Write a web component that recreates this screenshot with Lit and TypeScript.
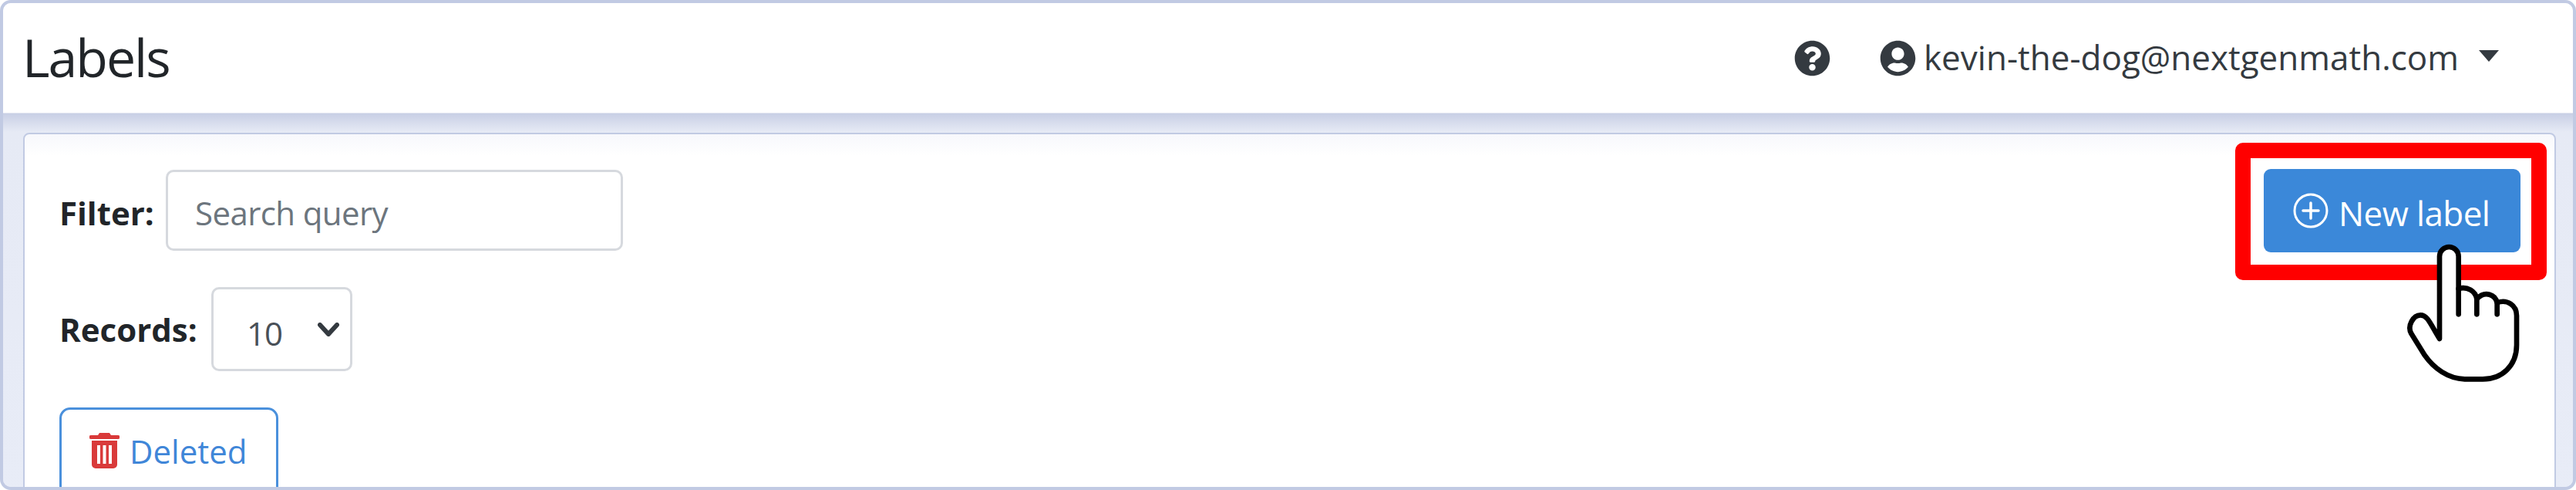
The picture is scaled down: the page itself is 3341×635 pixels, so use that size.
import { LitElement, html, css } from "lit";
import { customElement } from "lit/decorators.js";

@customElement("app-root")
export class AppRoot extends LitElement {
  static styles = css`
    :host {
      display: block;
      box-sizing: border-box;
      position: relative;
      width: 3341px;
      height: 635px;
      border: 4px solid #c1cae3;
      border-radius: 14px;
      overflow: hidden;
      background: #e8ecf7;
      font-family: "Open Sans", "Noto Sans", sans-serif;
      color: #212529;
    }
    .header {
      box-sizing: border-box;
      height: 143px;
      background: #fff;
      display: flex;
      align-items: center;
      padding: 0 96px 0 25px;
      border-bottom: 1px solid #e4e7f1;
    }
    h1 {
      margin: 0;
      font-size: 68px;
      font-weight: 500;
      letter-spacing: -2px;
      line-height: 1;
      flex: 1;
      position: relative;
      top: -1px;
    }
    .nav {
      display: flex;
      align-items: center;
      font-size: 44px;
      color: #343a40;
    }
    .nav svg { display: block; width: 47px; height: 47px; }
    .help { margin-right: 64px; }
    .user { margin-right: 12px; }
    .nav span.mail { position: relative; top: -1px; left: -2px; }
    .caret {
      width: 0;
      height: 0;
      margin-left: 24px;
      border-left: 13px solid transparent;
      border-right: 13px solid transparent;
      border-top: 15px solid #343a40;
      position: relative;
      top: -3px;
    }
    .main {
      height: 480px;
      padding: 25px 22px 0 26px;
      background: linear-gradient(#c8cfe5, #e6eaf5 24px, #e8ecf7);
    }
    .card {
      box-sizing: border-box;
      height: 520px;
      display: flex;
      justify-content: space-between;
      align-items: flex-start;
      padding: 46px 44px 0 45px;
      background: linear-gradient(#f7f8fc, #fff 28px);
      border: 2px solid #c1cae3;
      border-radius: 8px 8px 0 0;
      position: relative;
    }
    .left {
      display: flex;
      flex-direction: column;
      align-items: flex-start;
      gap: 47px;
    }
    .row {
      display: flex;
      align-items: center;
      font-size: 42px;
    }
    label {
      font-weight: 700;
      letter-spacing: 0;
      position: relative;
    }
    .filter label { width: 138px; top: 3px; }
    .records label { width: 197px; }
    .input {
      box-sizing: border-box;
      width: 593px;
      height: 105px;
      border: 3px solid #d6d9de;
      border-radius: 10px;
      padding: 6px 0 0 35px;
      display: flex;
      align-items: center;
      color: #6c757d;
      font-size: 42px;
      letter-spacing: -0.6px;
    }
    .select {
      box-sizing: border-box;
      width: 183px;
      height: 109px;
      border: 3px solid #d6d9de;
      border-radius: 10px;
      padding: 0 14px 0 43px;
      display: flex;
      align-items: center;
      justify-content: space-between;
      color: #495057;
      font-size: 42px;
      letter-spacing: -1px;
    }
    .select span { position: relative; top: 5px; }
    .select svg { width: 28px; height: 18px; }
    .deleted {
      box-sizing: border-box;
      width: 284px;
      height: 140px;
      border: 3px solid #4a90dc;
      border-radius: 14px;
      background: #fff;
      display: flex;
      align-items: flex-start;
      padding: 30px 0 0 36px;
      gap: 13px;
      color: #3f86d8;
      font-size: 42px;
      line-height: 60px;
      letter-spacing: 0;
    }
    .deleted span { position: relative; top: -6px; }
    .deleted svg { width: 39px; height: 46px; flex: none; }
    .new {
      box-sizing: border-box;
      width: 333px;
      height: 108px;
      border-radius: 9px;
      background: #3b88d9;
      color: #fff;
      font-size: 44px;
      letter-spacing: -0.6px;
      display: flex;
      align-items: center;
      gap: 15px;
      padding: 0 0 0 38px;
      margin-top: -1px;
    }
    .new span { position: relative; top: 3px; left: -2px; }
    .new svg { width: 46px; height: 46px; flex: none; }
    .highlight {
      position: absolute;
      left: 2895px;
      top: 181px;
      width: 404px;
      height: 178px;
      pointer-events: none;
    }
    .highlight svg { display: block; width: 100%; height: 100%; }
    .hand {
      position: absolute;
      left: 3116px;
      top: 310px;
      width: 150px;
      height: 200px;
      pointer-events: none;
    }
  `;

  render() {
    return html`
      <div class="header">
        <h1>Labels</h1>
        <div class="nav">
          <svg class="help" viewBox="0 0 512 512"><path fill="#343a40" d="M504 256c0 137-111 248-248 248S8 393 8 256 119 8 256 8s248 111 248 248zM262.700 90c-54.500 0-89.300 23-116.500 63.800-3.500 5.300-2.400 12.400 2.700 16.300l34.700 26.300c5.200 3.900 12.600 3 16.700-2.100 17.900-22.700 30.100-35.800 57.300-35.800 20.400 0 45.700 13.100 45.700 33 0 15-12.400 22.700-32.600 34-23.600 13.200-54.800 29.700-54.800 70.900V300c0 6.600 5.400 12 12 12h56c6.600 0 12-5.400 12-12v-1.300c0-28.600 83.500-29.800 83.500-107.200C380 133.200 319.500 90 262.700 90zM256 339c-25.500 0-46.200 20.700-46.200 46.200S230.500 431.400 256 431.400s46.200-20.700 46.200-46.200S281.500 339 256 339z"/></svg>
          <svg class="user" viewBox="0 0 512 512"><path fill="#343a40" d="M256 8C119 8 8 119 8 256s111 248 248 248 248-111 248-248S393 8 256 8zm0 96c48.600 0 88 39.400 88 88s-39.400 88-88 88-88-39.400-88-88 39.400-88 88-88zm0 344c-58.700 0-111.300-26.600-146.500-68.200 18.800-35.400 55.600-59.800 98.500-59.800 2.400 0 4.800.4 7.100 1.100 13 4.200 26.600 6.900 40.900 6.900s28-2.700 40.900-6.900c2.300-.7 4.700-1.100 7.100-1.100 42.900 0 79.700 24.400 98.500 59.800C367.300 421.400 314.700 448 256 448z"/></svg>
          <span class="mail">kevin-the-dog@nextgenmath.com</span>
          <span class="caret"></span>
        </div>
      </div>
      <div class="main">
        <div class="card">
          <div class="left">
            <div class="row filter">
              <label>Filter:</label>
              <div class="input">Search query</div>
            </div>
            <div class="row records">
              <label>Records:</label>
              <div class="select">
                <span>10</span>
                <svg viewBox="0 0 28 18"><path fill="none" stroke="#343a40" stroke-width="6" stroke-linecap="round" stroke-linejoin="round" d="M3 3l11 12L25 3"/></svg>
              </div>
            </div>
            <div class="deleted">
              <svg viewBox="0 0 39 46"><path fill="#d93a3a" fill-rule="evenodd" d="M13 0h13l2 3h9a2 2 0 0 1 0 5H2a2 2 0 0 1 0-5h9zM3 10h33v31a5 5 0 0 1-5 5H8a5 5 0 0 1-5-5zm7 6v24h4V16zm7.500 0v24h4V16zM25 16v24h4V16z"/></svg>
              <span>Deleted</span>
            </div>
          </div>
          <div class="new">
            <svg viewBox="0 0 46 46"><circle cx="23" cy="23" r="21" fill="none" stroke="#fff" stroke-width="3"/><path stroke="#fff" stroke-width="3.500" stroke-linecap="round" d="M23 13v20M13 23h20"/></svg>
            <span>New label</span>
          </div>
        </div>
      </div>
      <div class="highlight">
        <svg viewBox="0 0 404 178"><path fill="#f00" fill-rule="evenodd" d="M10 0h384a10 10 0 0 1 10 10v158a10 10 0 0 1-10 10H10a10 10 0 0 1-10-10V10A10 10 0 0 1 10 0zm10 20v138h364V20z"/></svg>
      </div>
      <svg class="hand" viewBox="210 60 450 600" fill="none">
        <path fill="#fff" stroke="#000" stroke-width="20" stroke-linecap="round" stroke-linejoin="round" d="M342 435V115a37 37 0 0 1 74 0V240C450 230 482 250 487 280C520 245 560 265 566 295C605 280 642 305 642 345V460C642 540 585 592 510 592H440C375 590 320 550 285 500L232 415C215 385 240 343 268 343C295 343 305 375 342 435Z"/>
        <path stroke="#000" stroke-width="20" stroke-linecap="round" d="M416 240V340M487 280V340M566 295V340"/>
      </svg>
    `;
  }
}
